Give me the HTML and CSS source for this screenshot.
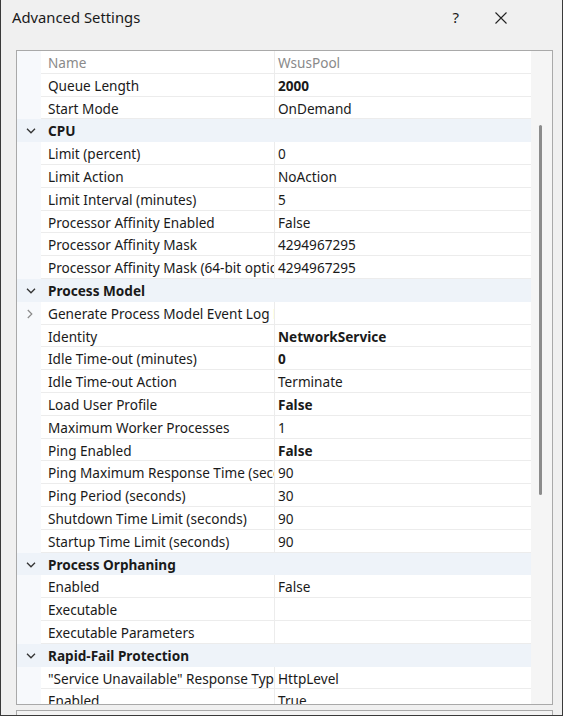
FILE: index.html
```html
<!DOCTYPE html>
<html lang="en">
<head>
    <meta charset="UTF-8">
    <title>Advanced Settings</title>
    <link rel="stylesheet" href="styles.css">
</head>
<body>
    <div class="window">
        <div class="titlebar">
            <span class="title">Advanced Settings</span>
            <span class="help">?</span>
            <svg class="close" width="12" height="12" viewBox="0 0 12 12">
                <path d="M0.5 0.5 L11.5 11.5 M11.5 0.5 L0.5 11.5" stroke="#222" stroke-width="1.1" fill="none"/>
            </svg>
        </div>

        <div class="grid-box">
            <div class="list">
                <div class="row header"><div class="gutter"></div><div class="name">Name</div><div class="value">WsusPool</div></div>
                <div class="row"><div class="gutter"></div><div class="name">Queue Length</div><div class="value bold">2000</div></div>
                <div class="row"><div class="gutter"></div><div class="name">Start Mode</div><div class="value">OnDemand</div></div>

                <div class="row category"><div class="gutter"><svg class="chev" width="10" height="6" viewBox="0 0 10 6"><polyline points="1,0.8 5,4.8 9,0.8" fill="none" stroke="#333" stroke-width="1.3"/></svg></div><div class="cat-label">CPU</div></div>
                <div class="row"><div class="gutter"></div><div class="name">Limit (percent)</div><div class="value">0</div></div>
                <div class="row"><div class="gutter"></div><div class="name">Limit Action</div><div class="value">NoAction</div></div>
                <div class="row"><div class="gutter"></div><div class="name">Limit Interval (minutes)</div><div class="value">5</div></div>
                <div class="row"><div class="gutter"></div><div class="name">Processor Affinity Enabled</div><div class="value">False</div></div>
                <div class="row"><div class="gutter"></div><div class="name">Processor Affinity Mask</div><div class="value">4294967295</div></div>
                <div class="row"><div class="gutter"></div><div class="name">Processor Affinity Mask (64-bit option)</div><div class="value">4294967295</div></div>

                <div class="row category"><div class="gutter"><svg class="chev" width="10" height="6" viewBox="0 0 10 6"><polyline points="1,0.8 5,4.8 9,0.8" fill="none" stroke="#333" stroke-width="1.3"/></svg></div><div class="cat-label">Process Model</div></div>
                <div class="row"><div class="gutter"><svg class="arrow" width="6" height="10" viewBox="0 0 6 10"><polyline points="0.8,1 4.8,5 0.8,9" fill="none" stroke="#8a8a8a" stroke-width="1.2"/></svg></div><div class="name">Generate Process Model Event Log Entry</div><div class="value"></div></div>
                <div class="row"><div class="gutter"></div><div class="name">Identity</div><div class="value bold">NetworkService</div></div>
                <div class="row"><div class="gutter"></div><div class="name">Idle Time-out (minutes)</div><div class="value bold">0</div></div>
                <div class="row"><div class="gutter"></div><div class="name">Idle Time-out Action</div><div class="value">Terminate</div></div>
                <div class="row"><div class="gutter"></div><div class="name">Load User Profile</div><div class="value bold">False</div></div>
                <div class="row"><div class="gutter"></div><div class="name">Maximum Worker Processes</div><div class="value">1</div></div>
                <div class="row"><div class="gutter"></div><div class="name">Ping Enabled</div><div class="value bold">False</div></div>
                <div class="row"><div class="gutter"></div><div class="name">Ping Maximum Response Time (seconds)</div><div class="value">90</div></div>
                <div class="row"><div class="gutter"></div><div class="name">Ping Period (seconds)</div><div class="value">30</div></div>
                <div class="row"><div class="gutter"></div><div class="name">Shutdown Time Limit (seconds)</div><div class="value">90</div></div>
                <div class="row"><div class="gutter"></div><div class="name">Startup Time Limit (seconds)</div><div class="value">90</div></div>

                <div class="row category"><div class="gutter"><svg class="chev" width="10" height="6" viewBox="0 0 10 6"><polyline points="1,0.8 5,4.8 9,0.8" fill="none" stroke="#333" stroke-width="1.3"/></svg></div><div class="cat-label">Process Orphaning</div></div>
                <div class="row"><div class="gutter"></div><div class="name">Enabled</div><div class="value">False</div></div>
                <div class="row"><div class="gutter"></div><div class="name">Executable</div><div class="value"></div></div>
                <div class="row"><div class="gutter"></div><div class="name">Executable Parameters</div><div class="value"></div></div>

                <div class="row category"><div class="gutter"><svg class="chev" width="10" height="6" viewBox="0 0 10 6"><polyline points="1,0.8 5,4.8 9,0.8" fill="none" stroke="#333" stroke-width="1.3"/></svg></div><div class="cat-label">Rapid-Fail Protection</div></div>
                <div class="row"><div class="gutter"></div><div class="name">"Service Unavailable" Response Type</div><div class="value">HttpLevel</div></div>
                <div class="row"><div class="gutter"></div><div class="name">Enabled</div><div class="value">True</div></div>
            </div>
            <div class="scrollbar">
                <div class="thumb"></div>
            </div>
        </div>

        <div class="desc-box"></div>
    </div>
</body>
</html>
```

FILE: styles.css
```css
body {
    margin: 0;
    font-family: "Noto Sans", "Open Sans", sans-serif;
    color: #1a1a1a;
}

.window {
    width: 563px;
    height: 716px;
    box-sizing: border-box;
    background-color: #f0f0f0;
    border-left: 1px solid #3a3a3a;
    border-right: 1px solid #3a3a3a;
    border-bottom: 1px solid #3a3a3a;
    overflow: hidden;
}

.titlebar {
    height: 50px;
    display: flex;
    align-items: flex-start;
    padding-top: 7px;
    box-sizing: border-box;
}

.title {
    font-size: 14.8px;
    margin-left: 11px;
    flex: 1;
}

.help {
    font-size: 15px;
    margin-right: 36px;
}

.close {
    margin-top: 5px;
    margin-right: 55px;
}

.grid-box {
    margin-left: 15px;
    width: 537px;
    height: 655px;
    box-sizing: border-box;
    border: 1px solid #a9a9a9;
    background-color: #ffffff;
    display: flex;
    overflow: hidden;
}

.list {
    width: 514px;
    overflow: hidden;
}

.row {
    display: flex;
    height: 22.8px;
    font-size: 13.6px;
    line-height: 24px;
}

.gutter {
    width: 24px;
    flex-shrink: 0;
    background-color: #f7f9fc;
    position: relative;
}

.name {
    width: 234px;
    flex-shrink: 0;
    padding-left: 7px;
    box-sizing: border-box;
    white-space: nowrap;
    overflow: hidden;
    border-right: 1px solid #ececec;
    border-bottom: 1px solid #ececec;
}

.value {
    flex: 1;
    padding-left: 3px;
    white-space: nowrap;
    overflow: hidden;
    border-bottom: 1px solid #ececec;
}

.bold {
    font-weight: 700;
}

.header .name,
.header .value {
    color: #8a8a8a;
}

.category {
    background-color: #eef3f9;
}

.category .gutter {
    background-color: #eef3f9;
}

.cat-label {
    padding-left: 7px;
    font-weight: 700;
}

.chev {
    position: absolute;
    left: 9px;
    top: 9px;
}

.arrow {
    position: absolute;
    left: 10px;
    top: 7px;
}

.scrollbar {
    flex: 1;
    background-color: #f5f5f5;
    position: relative;
}

.thumb {
    position: absolute;
    left: 8px;
    top: 74px;
    width: 3px;
    height: 370px;
    border-radius: 2px;
    background-color: #8c8c8c;
}

.desc-box {
    margin-left: 15px;
    margin-top: 5px;
    width: 537px;
    height: 20px;
    border: 1px solid #a9a9a9;
    box-sizing: border-box;
    background-color: #f3f3f3;
}
```
